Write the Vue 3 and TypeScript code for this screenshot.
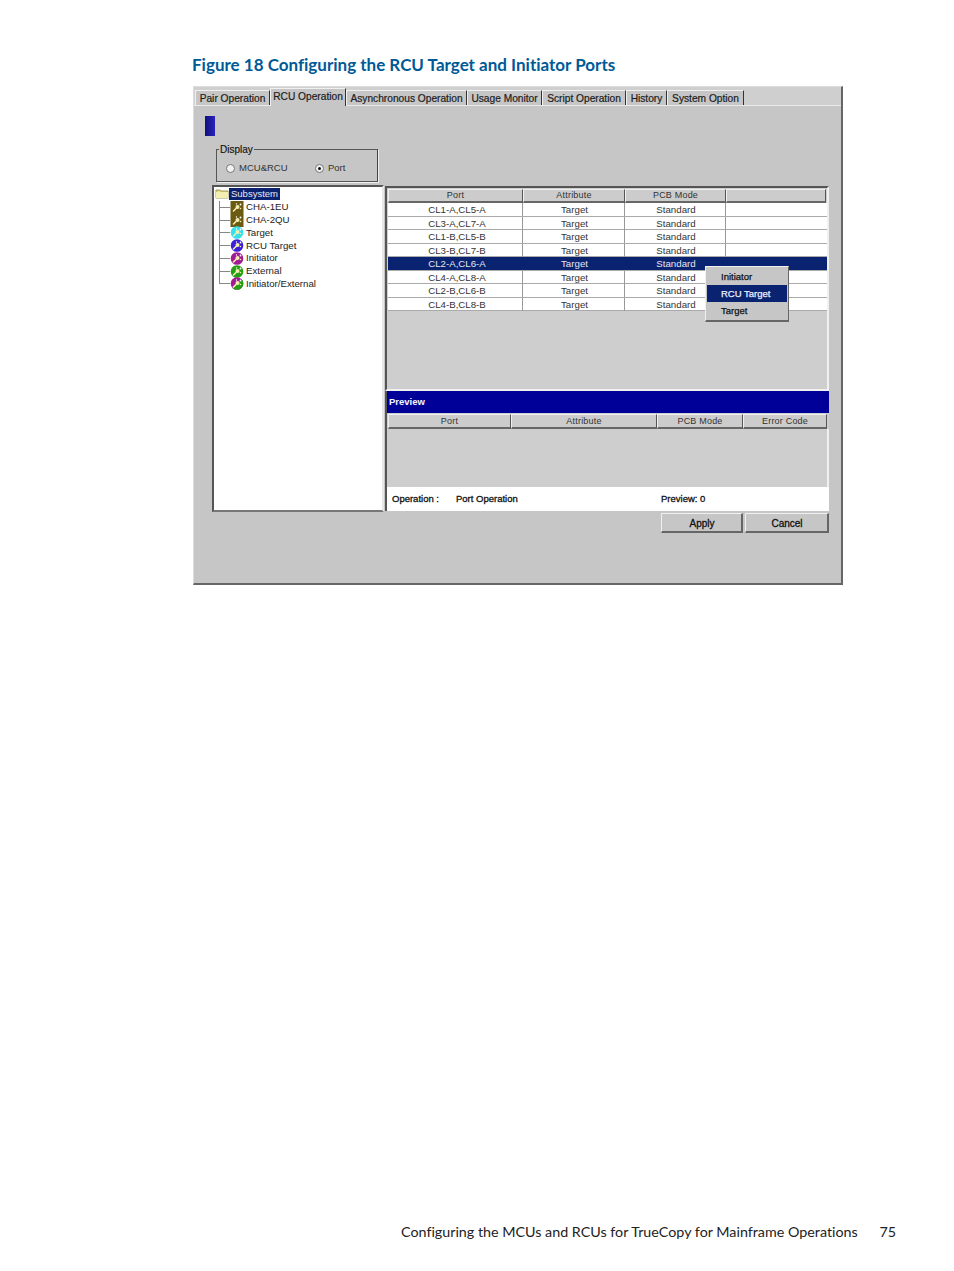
<script setup lang="ts">
interface Tab { label: string; width: number; active?: boolean }
interface TreeItem { label: string; fill: string; fill2?: string; square?: boolean }

const tabs: Tab[] = [
  { label: 'Pair Operation', width: 75 },
  { label: 'RCU Operation', width: 76, active: true },
  { label: 'Asynchronous Operation', width: 121 },
  { label: 'Usage Monitor', width: 75 },
  { label: 'Script Operation', width: 84 },
  { label: 'History', width: 41 },
  { label: 'System Option', width: 77 },
]

const treeItems: TreeItem[] = [
  { label: 'CHA-1EU', fill: '#6b5a12', square: true },
  { label: 'CHA-2QU', fill: '#6b5a12', square: true },
  { label: 'Target', fill: '#35e0ea' },
  { label: 'RCU Target', fill: '#3a1fd6' },
  { label: 'Initiator', fill: '#a01a94' },
  { label: 'External', fill: '#22a012' },
  { label: 'Initiator/External', fill: '#a01a94', fill2: '#22a012' },
]

const rows: string[] = [
  'CL1-A,CL5-A', 'CL3-A,CL7-A', 'CL1-B,CL5-B', 'CL3-B,CL7-B',
  'CL2-A,CL6-A', 'CL4-A,CL8-A', 'CL2-B,CL6-B', 'CL4-B,CL8-B',
]
const selectedRow = 'CL2-A,CL6-A'
const topHeaders = ['Port', 'Attribute', 'PCB Mode', '']
const previewHeaders = ['Port', 'Attribute', 'PCB Mode', 'Error Code']
const menu = ['Initiator', 'RCU Target', 'Target']
</script>

<template>
  <div class="page">
    <h1 class="title">Figure 18 Configuring the RCU Target and Initiator Ports</h1>

    <div class="window">
      <div class="tabs">
        <div
          v-for="t in tabs"
          :key="t.label"
          class="tab"
          :class="{ active: t.active }"
          :style="{ width: t.width + 'px' }"
        >{{ t.label }}</div>
      </div>

      <div class="content">
        <div class="accent"></div>

        <div class="group">
          <span class="legend">Display</span>
          <label class="radio r1"><i class="dot"></i>MCU&amp;RCU</label>
          <label class="radio r2"><i class="dot on"></i>Port</label>
        </div>

        <div class="main">
          <div class="tree">
            <div class="tree-root">
              <svg class="folder" width="14" height="11" viewBox="0 0 14 11">
                <path d="M1 2h4l1 1h7v7H1z" fill="#e8dc8a" stroke="#8a8040" stroke-width=".8" />
                <path d="M1 4h12v6H1z" fill="#f4eeb0" />
              </svg>
              <span class="root-label">Subsystem</span>
            </div>
            <div class="tree-list">
              <div v-for="it in treeItems" :key="it.label" class="tree-row">
                <span class="branch"></span>
                <svg class="node" width="14" height="13" viewBox="0 0 14 13">
                  <rect v-if="it.square" x=".5" y="0" width="13" height="13" :fill="it.fill" />
                  <circle v-else cx="7" cy="6.5" r="6.3" :fill="it.fill" />
                  <path v-if="it.fill2" d="M2.5 11 L11.5 2 A6.3 6.3 0 0 1 2.5 11z" :fill="it.fill2" />
                  <path d="M3.5 10 L6 7.5" stroke="#f5eeb0" stroke-width="1.6" stroke-linecap="round" />
                  <circle cx="7.5" cy="6" r="2" fill="#f5eeb0" />
                  <circle cx="10.5" cy="3.5" r=".9" fill="#fff" />
                  <circle cx="10.5" cy="7.5" r=".8" fill="#f5eeb0" />
                  <circle cx="6.5" cy="3" r=".7" fill="#fff" />
                </svg>
                <span class="tree-label">{{ it.label }}</span>
              </div>
            </div>
          </div>

          <div class="right">
            <div class="table-panel">
              <div class="thead top-cols">
                <div v-for="(h, i) in topHeaders" :key="i" class="th">{{ h }}</div>
              </div>
              <div
                v-for="r in rows"
                :key="r"
                class="tr top-cols"
                :class="{ selected: r === selectedRow }"
              >
                <div class="td first">{{ r }}</div>
                <div class="td">Target</div>
                <div class="td">Standard</div>
                <div class="td"></div>
              </div>

              <div class="menu">
                <div
                  v-for="m in menu"
                  :key="m"
                  class="menu-item"
                  :class="{ hot: m === 'RCU Target' }"
                >{{ m }}</div>
              </div>
            </div>

            <div class="preview">
              <div class="preview-bar">Preview</div>
              <div class="thead preview-cols">
                <div v-for="h in previewHeaders" :key="h" class="th">{{ h }}</div>
              </div>
              <div class="preview-body"></div>
              <div class="status">
                <span class="s1">Operation :</span>
                <span class="s2">Port Operation</span>
                <span class="s3">Preview: 0</span>
              </div>
            </div>

            <div class="buttons">
              <button class="btn apply">Apply</button>
              <button class="btn cancel">Cancel</button>
            </div>
          </div>
        </div>
      </div>
    </div>

    <footer class="footer">
      <span>Configuring the MCUs and RCUs for TrueCopy for Mainframe Operations</span>
      <span class="pageno">75</span>
    </footer>
  </div>
</template>

<style>
html, body { margin: 0; background: #fff; }
</style>

<style scoped>
.page {
  width: 954px;
  height: 1271px;
  box-sizing: border-box;
  padding: 53px 0 0 193px;
  display: flex;
  flex-direction: column;
  position: relative;
  font-family: "Liberation Sans", Arial, sans-serif;
}
.title {
  margin: 0 0 0 -1px;
  height: 33px;
  font-family: Lato, "Noto Sans", sans-serif;
  font-size: 17px;
  line-height: 24px;
  font-weight: 700;
  font-variant-ligatures: none;
  color: #005a96;
  white-space: nowrap;
}
.window {
  width: 650px;
  height: 499px;
  box-sizing: border-box;
  background: #c6c6c6;
  border-top: 1px solid #dcdcdc;
  border-left: 1px solid #dcdcdc;
  border-right: 2px solid #666;
  border-bottom: 2px solid #666;
  display: flex;
  flex-direction: column;
}
.tabs {
  height: 18px;
  flex: none;
  display: flex;
  align-items: flex-end;
  padding-left: 1px;
  background: #cfcfcf;
  border-bottom: 1px solid #eaeaea;
}
.tab {
  height: 15px;
  box-sizing: border-box;
  font-size: 10.2px;
  line-height: 15px;
  text-align: center;
  color: #1c1c1c;
  white-space: nowrap;
  background: #c6c6c6;
  border-left: 1px solid #f0f0f0;
  border-top: 1px solid #f0f0f0;
  border-right: 1px solid #333;
  -webkit-text-stroke: 0.2px #1c1c1c;
}
.tab.active {
  height: 18px;
  line-height: 15px;
  margin-bottom: -1px;
  background: #c6c6c6;
}
.content {
  flex: 1;
  padding: 10px 0 0 11px;
  display: flex;
  flex-direction: column;
}
.accent {
  width: 10px;
  height: 20px;
  background: linear-gradient(90deg, #10107a, #2a22c0);
}
.group {
  position: relative;
  width: 162px;
  height: 33px;
  box-sizing: border-box;
  margin: 13px 0 0 11px;
  border: 1px solid #555;
  border-right-color: #444;
  box-shadow: 1px 1px 0 #eee;
}
.legend {
  position: absolute;
  left: 2px;
  top: -6px;
  padding: 0 1px;
  background: #c6c6c6;
  font-size: 10px;
  line-height: 11px;
  color: #111;
  -webkit-text-stroke: 0.15px #111;
}
.radio {
  position: absolute;
  top: 12px;
  display: flex;
  align-items: center;
  gap: 4px;
  font-size: 9.5px;
  line-height: 12px;
  color: #333;
}
.r1 { left: 9px; }
.r2 { left: 98px; }
.dot {
  width: 9px;
  height: 9px;
  border-radius: 50%;
  background: #f2f2f2;
  border: 1px solid #777;
  box-sizing: border-box;
  position: relative;
}
.dot.on::after {
  content: "";
  position: absolute;
  left: 2px;
  top: 2px;
  width: 3px;
  height: 3px;
  border-radius: 50%;
  background: #111;
}
.main {
  margin: 3px 0 0 7px;
  display: flex;
  gap: 1px;
}
.tree {
  width: 172px;
  height: 327px;
  box-sizing: border-box;
  background: #fff;
  border-top: 2px solid #555;
  border-left: 2px solid #555;
  border-right: 2px solid #e8e8e8;
  border-bottom: 2px solid #777;
  padding: 1px 0 0 1px;
  font-size: 9.7px;
  color: #222;
}
.tree-root {
  display: flex;
  align-items: flex-start;
  height: 13px;
}
.folder { flex: none; }
.root-label {
  background: #0b2270;
  color: #e8e8f4;
  font-size: 9.5px;
  line-height: 12px;
  padding: 0 2px;
}
.tree-list {
  margin-left: 4px;
  border-left: 1px solid #888;
  height: 83px;
}
.tree-row {
  display: flex;
  align-items: center;
  height: 12.75px;
  position: relative;
}
.branch {
  width: 10px;
  height: 1px;
  background: #888;
  flex: none;
}
.node { flex: none; }
.tree-label {
  margin-left: 2px;
  white-space: nowrap;
  line-height: 12px;
}
.right {
  width: 444px;
  margin-top: 1px;
  display: flex;
  flex-direction: column;
}
.table-panel {
  position: relative;
  height: 205px;
  box-sizing: border-box;
  background: #cecece;
  border-top: 2px solid #555;
  border-left: 2px solid #555;
  border-right: 2px solid #f0f0f0;
  border-bottom: 2px solid #f0f0f0;
  padding: 1px 0 0 1px;
}
.top-cols {
  display: grid;
  grid-template-columns: 135px 102px 101px 100px;
}
.preview-cols {
  display: grid;
  grid-template-columns: 123px 146px 86px 84px;
}
.thead { height: 15px; }
.th {
  box-sizing: border-box;
  height: 15px;
  background: #cccccc;
  border-top: 1px solid #f0f0f0;
  border-left: 1px solid #f0f0f0;
  border-right: 1px solid #555;
  border-bottom: 2px solid #666;
  font-size: 9px;
  line-height: 13px;
  text-align: center;
  color: #333;
  letter-spacing: 0.2px;
}
.thead.top-cols { height: 14px; }
.thead.top-cols .th { height: 14px; line-height: 11px; }
.tr {
  height: 13.5px;
  box-sizing: border-box;
  background: #fff;
  border-bottom: 1px solid #aaa;
}
.td {
  font-size: 9.7px;
  line-height: 13px;
  text-align: center;
  color: #333;
  border-right: 1px solid #999;
  box-sizing: border-box;
  height: 13px;
  padding-left: 2px;
}
.td.first { padding-left: 4px; }
.td:last-child { border-right: 0; }
.tr.selected { background: #0a2370; }
.tr.selected .td { color: #e4e6f2; border-right-color: #0a2370; }
.menu {
  position: absolute;
  left: 318px;
  top: 78px;
  width: 84px;
  height: 56px;
  box-sizing: border-box;
  background: #c6c6c6;
  border-top: 1px solid #f0f0f0;
  border-left: 1px solid #f0f0f0;
  border-right: 1px solid #666;
  border-bottom: 2px solid #666;
  padding: 1px 1px;
  display: flex;
  flex-direction: column;
}
.menu-item {
  height: 17px;
  font-size: 9.5px;
  line-height: 17px;
  padding-left: 14px;
  color: #111;
  -webkit-text-stroke: 0.25px #111;
}
.menu-item.hot {
  background: #0a2370;
  color: #eef;
  -webkit-text-stroke: 0.25px #eef;
}
.preview {
  height: 120px;
  display: flex;
  flex-direction: column;
  background: #cecece;
  border-left: 2px solid #555;
  box-sizing: border-box;
}
.preview-bar {
  height: 22px;
  flex: none;
  background: #000098;
  color: #f4f4ff;
  font-size: 9.5px;
  font-weight: 700;
  line-height: 22px;
  padding-left: 2px;
}
.preview .thead {
  margin-left: 1px;
  margin-top: 1px;
}
.preview-body {
  flex: 1;
  border-right: 2px solid #f0f0f0;
}
.status {
  height: 24px;
  flex: none;
  background: #fff;
  position: relative;
  font-size: 9.5px;
  line-height: 24px;
  color: #111;
  -webkit-text-stroke: 0.3px #111;
}
.s1 { position: absolute; left: 5px; }
.s2 { position: absolute; left: 69px; }
.s3 { position: absolute; left: 274px; }
.buttons {
  margin-top: 2px;
  display: flex;
  justify-content: flex-end;
  gap: 2px;
}
.btn {
  height: 20px;
  box-sizing: border-box;
  padding: 1px 0 0 1px;
  background: #c6c6c6;
  border-top: 1px solid #f0f0f0;
  border-left: 1px solid #f0f0f0;
  border-right: 2px solid #666;
  border-bottom: 2px solid #666;
  font-family: "Liberation Sans", Arial, sans-serif;
  font-size: 10px;
  color: #111;
  -webkit-text-stroke: 0.3px #111;
}
.apply { width: 82px; }
.cancel { width: 84px; }
.footer {
  position: absolute;
  left: 401px;
  top: 1222px;
  width: 495px;
  display: flex;
  justify-content: space-between;
  font-family: Lato, "Noto Sans", sans-serif;
  font-size: 14.3px;
  line-height: 20px;
  font-variant-ligatures: none;
  color: #222;
  white-space: nowrap;
}
</style>
